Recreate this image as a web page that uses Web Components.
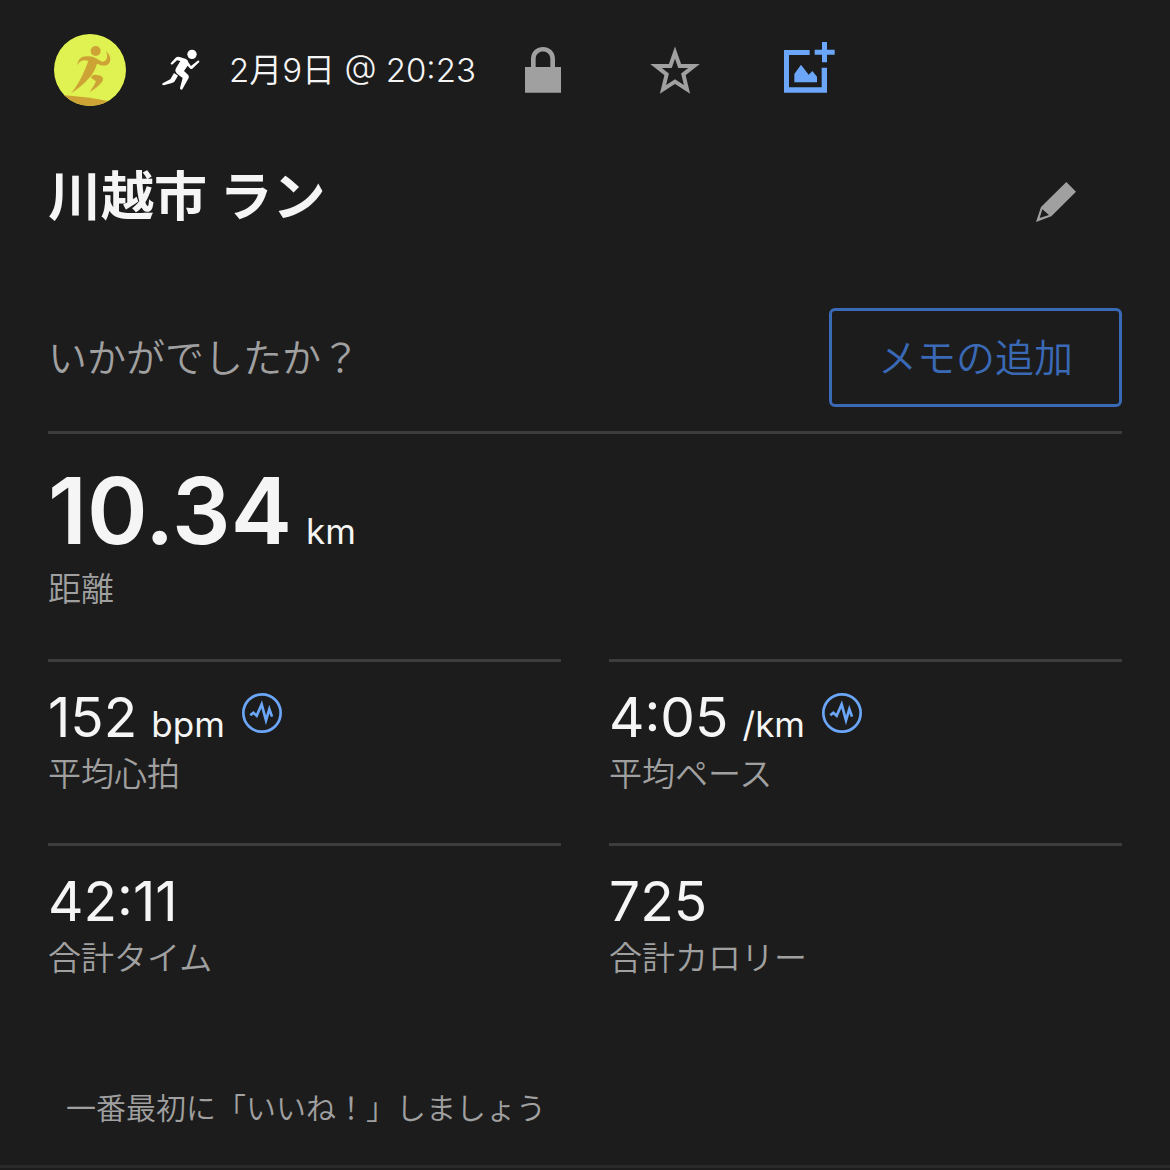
<!DOCTYPE html>
<html lang="ja">
<head>
<meta charset="utf-8">
<meta name="viewport" content="width=device-width, initial-scale=1">
<title>川越市 ラン</title>
<style>
  :root {
    --bg: #1c1c1c;
    --text: #f5f5f5;
    --muted: #a0a0a0;
    --line: #3d3d3d;
    --link: #6ba6f8;
    --action: #3a69b5;
  }
  body { margin: 0; background: var(--bg); color: var(--text); font-family: Inter, 'Noto Sans CJK JP', sans-serif; }
</style>
</head>
<body>
<activity-page>
  <activity-header slot="header" date="2月9日 @ 20:23"></activity-header>
  <activity-title slot="header">川越市 ラン</activity-title>
  <activity-memo slot="header" action="メモの追加">いかがでしたか？</activity-memo>
  <activity-stat size="large" value="10.34" unit="km">距離</activity-stat>
  <activity-stat value="152" unit="bpm" chart>平均心拍</activity-stat>
  <activity-stat value="4:05" unit="/km" chart>平均ペース</activity-stat>
  <activity-stat value="42:11">合計タイム</activity-stat>
  <activity-stat value="725">合計カロリー</activity-stat>
  <activity-likes slot="footer">一番最初に「いいね！」しましょう</activity-likes>
</activity-page>

<script>
function define(name, html, setup) {
  const template = document.createElement('template');
  template.innerHTML = html;
  customElements.define(name, class extends HTMLElement {
    connectedCallback() {
      if (this.shadowRoot) return;
      const root = this.attachShadow({ mode: 'open' });
      root.appendChild(template.content.cloneNode(true));
      if (setup) setup(this, root);
    }
  });
}

define('activity-page', `
<style>
  :host { display: block; }
  main { padding: 0 48px; }
  .stats { display: grid; grid-template-columns: 1fr 1fr; column-gap: 48px; }
</style>
<main>
  <slot name="header"></slot>
  <div class="stats"><slot></slot></div>
</main>
<slot name="footer"></slot>
`);

define('icon-button', `
<style>
  :host { display: block; flex: none; }
  button { appearance: none; display: flex; align-items: center; justify-content: center; width: 132px; height: 80px; padding: 0; border: 0; background: transparent; color: inherit; cursor: pointer; }
</style>
<button type="button"><slot></slot></button>
`, (el, root) => {
  root.querySelector('button').setAttribute('aria-label', el.getAttribute('label') || '');
});

define('activity-header', `
<style>
  :host { display: block; }
  header { display: flex; align-items: center; height: 140px; padding-left: 6px; color: var(--muted); }
  svg { display: block; flex: none; }
  .runner { margin-left: 35px; }
  time { min-width: 248px; margin-left: 28px; font-size: 33px; font-weight: 350; line-height: 48px; white-space: nowrap; color: var(--text); }
  .photo { color: var(--link); }
</style>
<header>
  <svg width="72" height="72" viewBox="42 42 216 216" aria-hidden="true">
    <clipPath id="round"><circle cx="150" cy="150" r="108"/></clipPath>
    <g clip-path="url(#round)">
      <path fill="#dff251" d="M42 42h216v216H42z"/>
      <g fill="#cda336">
        <path d="M60 224Q140 230 204 243L190 270H60z"/>
        <circle cx="167" cy="93" r="15"/>
        <path d="M111 136C115 118 124 109 138 109C150 109 160 110 168 115L186 125C196 126 207 116 198 93C210 104 215 118 208 129C202 138 190 140 171 131C166 147 160 160 148 173C132 192 113 206 93 220C107 203 116 187 125 170C134 151 140 137 145 123C130 118 120 123 111 136z"/>
        <path d="M153 173C156 162 166 163 181 167C190 170 191 179 185 187C176 199 162 208 149 217C156 205 163 195 168 184C163 180 159 177 153 173z"/>
      </g>
    </g>
  </svg>
  <svg class="runner" width="40" height="44" viewBox="363 84 120 132" fill="#fff" aria-hidden="true">
    <circle cx="456" cy="103" r="14"/>
    <path d="M392 130L407 113Q412 109 419 111L438 117Q444 120 446 128L453 138L473 122Q479 121 478 126L457 146Q452 149 448 143L443 137L432 153L444 164Q448 168 446 174L427 208Q421 212 420 204L428 174L411 161Q403 154 408 145L421 123L411 121L398 133Q392 135 392 130z"/>
    <path d="M402 159L414 167L404 184Q402 188 396 189L371 196Q364 195 368 190L391 178z"/>
  </svg>
  <time></time>
  <icon-button label="非公開">
    <svg width="36" height="46" viewBox="915 81 108 138" fill="currentColor"><path d="M915 141h18v-24c0-48 72-48 72 0v24h18v77H915zM947 141h44v-24c0-30-44-30-44 0z"/></svg>
  </icon-button>
  <icon-button label="お気に入り">
    <svg width="50" height="50" viewBox="60 75 150 150" fill="none" stroke="currentColor" stroke-width="12"><path d="M135 98L149 138L192 138L160 163L171 208L135 185L99 208L110 163L78 138L121 138z"/></svg>
  </icon-button>
  <icon-button class="photo" label="写真を追加">
    <svg width="56" height="56" viewBox="447 66 168 168" fill="currentColor"><path d="M462 90h77v15h-62v97h98v-59h16v75H462zM576 66h15v23h23v15h-23v23h-15v-23h-22V89h22zM493 187v-25l20-28 23 30 11-11 14 17v17z"/></svg>
  </icon-button>
</header>
`, (el, root) => {
  root.querySelector('time').textContent = el.getAttribute('date') || '';
});

define('activity-title', `
<style>
  :host { display: flex; align-items: center; justify-content: space-between; height: 124px; color: var(--text); }
  h1 { margin: 0 0 10px; font-size: 53px; font-weight: 700; line-height: 72px; }
  icon-button { color: var(--muted); }
</style>
<h1><slot></slot></h1>
<icon-button label="名前を編集">
  <svg width="40" height="40" viewBox="78 66 120 120" fill="currentColor"><path fill-rule="evenodd" d="M169 66L198 95L124 169L78 186L93 141zM97 148L89 174L117 165z"/></svg>
</icon-button>
`);

define('activity-memo', `
<style>
  :host { display: flex; align-items: center; justify-content: space-between; padding: 44px 0 24px; border-bottom: 3px solid var(--line); font-size: 39px; font-weight: 350; line-height: 56px; color: var(--muted); }
  button { appearance: none; height: 99px; padding: 0 46px; border: 3px solid var(--action); border-radius: 6px; background: transparent; font: inherit; color: var(--action); cursor: pointer; }
</style>
<span><slot></slot></span>
<button type="button"></button>
`, (el, root) => {
  root.querySelector('button').textContent = el.getAttribute('action') || '';
});

define('activity-stat', `
<style>
  :host { display: block; padding: 22px 0 45px; border-top: 3px solid var(--line); }
  :host([size=large]) { grid-column: 1 / -1; padding-bottom: 47px; border-top: 0; }
  .row { display: flex; align-items: baseline; height: 66px; line-height: 66px; white-space: nowrap; }
  .value { font-size: 55px; }
  .unit { margin-left: 14px; font-size: 35px; }
  :host([size=large]) .row { height: 110px; line-height: 110px; }
  :host([size=large]) .value { font-size: 92px; font-weight: 600; }
  .label { font-size: 33px; font-weight: 350; line-height: 48px; color: var(--muted); }
  :host([size=large]) .label { line-height: 46px; }
  svg { display: none; align-self: flex-start; flex: none; margin: 9px 0 0 17px; color: var(--link); }
  :host([chart]) svg { display: block; }
</style>
<div class="row">
  <span class="value"></span>
  <span class="unit"></span>
  <svg width="40" height="40" viewBox="612 128 120 120" fill="none" stroke="currentColor" aria-hidden="true">
    <circle cx="672" cy="188" r="56" stroke-width="8"/>
    <path stroke-width="8" d="M637 195L646 187L656 196L671 162L684 210L694 176L702 199"/>
  </svg>
</div>
<div class="label"><slot></slot></div>
`, (el, root) => {
  root.querySelector('.value').textContent = el.getAttribute('value') || '';
  const unit = root.querySelector('.unit');
  if (el.hasAttribute('unit')) unit.textContent = el.getAttribute('unit');
  else unit.remove();
});

define('activity-likes', `
<style>
  :host { display: block; padding: 57px 66px 33px; border-bottom: 3px solid #292929; font-size: 30px; font-weight: 350; line-height: 48px; color: var(--muted); }
</style>
<slot></slot>
`);
</script>
</body>
</html>
